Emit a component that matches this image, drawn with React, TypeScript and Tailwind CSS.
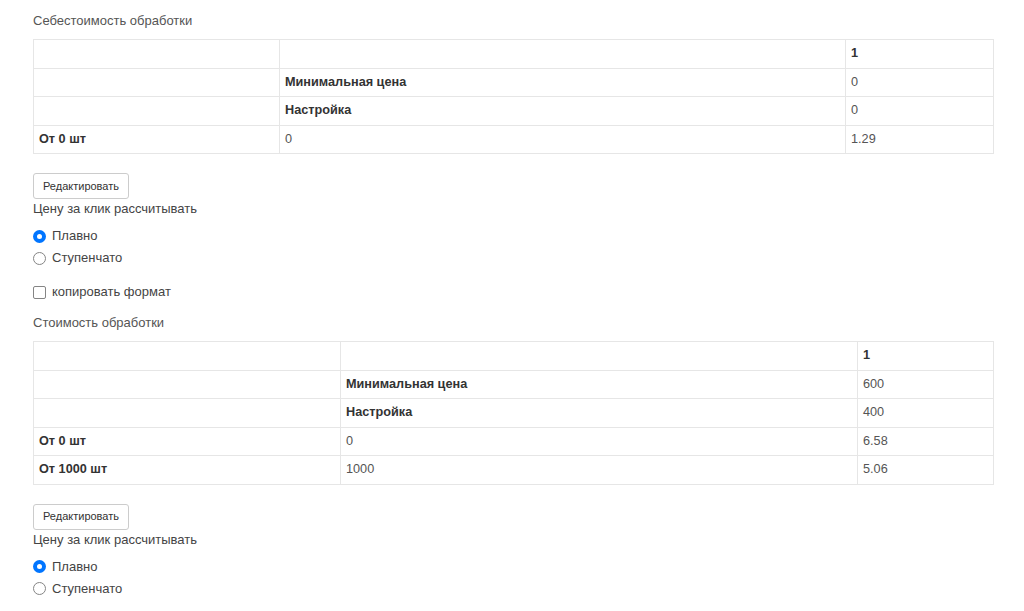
import React from "react";

interface Row {
  label: string;
  mid: string;
  value: string;
  labelBold?: boolean;
  midBold?: boolean;
  valueBold?: boolean;
}

const costRows: Row[] = [
  { label: "", mid: "", value: "1", valueBold: true },
  { label: "", mid: "Минимальная цена", value: "0", midBold: true },
  { label: "", mid: "Настройка", value: "0", midBold: true },
  { label: "От 0 шт", mid: "0", value: "1.29", labelBold: true },
];

const priceRows: Row[] = [
  { label: "", mid: "", value: "1", valueBold: true },
  { label: "", mid: "Минимальная цена", value: "600", midBold: true },
  { label: "", mid: "Настройка", value: "400", midBold: true },
  { label: "От 0 шт", mid: "0", value: "6.58", labelBold: true },
  { label: "От 1000 шт", mid: "1000", value: "5.06", labelBold: true },
];

const cell = (bold?: boolean) =>
  `border border-[#e6e6e6] h-[28.5px] px-[5px] py-0 align-middle text-[12.7px] ${
    bold ? "font-bold text-[#333]" : "text-[#555]"
  }`;

function PriceTable({ rows, widths }: { rows: Row[]; widths: string[] }) {
  return (
    <table className="w-[960px] border-collapse table-fixed">
      <colgroup>
        <col className={widths[0]} />
        <col className={widths[1]} />
        <col className={widths[2]} />
      </colgroup>
      <tbody>
        {rows.map((r, i) => (
          <tr key={i}>
            <td className={cell(r.labelBold)}>{r.label}</td>
            <td className={cell(r.midBold)}>{r.mid}</td>
            <td className={cell(r.valueBold)}>{r.value}</td>
          </tr>
        ))}
      </tbody>
    </table>
  );
}

function Radio({ checked, label }: { checked?: boolean; label: string }) {
  return (
    <label className="flex items-center gap-[6px] h-[22px] text-[13px] text-[#444]">
      {checked ? (
        <span className="w-[13px] h-[13px] rounded-full bg-[#0075ff] flex items-center justify-center">
          <span className="w-[5px] h-[5px] rounded-full bg-white" />
        </span>
      ) : (
        <span className="w-[13px] h-[13px] rounded-full border border-[#858585] bg-white" />
      )}
      {label}
    </label>
  );
}

function Section({
  title,
  rows,
  widths,
}: {
  title: string;
  rows: Row[];
  widths: string[];
}) {
  return (
    <div>
      <div className="text-[13px] text-[#555] leading-[18px]">{title}</div>
      <div className="mt-[9px]">
        <PriceTable rows={rows} widths={widths} />
      </div>
      <button className="mt-[19px] h-[26px] px-[9px] border border-[#ccc] rounded-[3px] bg-white text-[11px] text-[#333]">
        Редактировать
      </button>
      <div className="text-[13px] text-[#444] leading-[18px] mt-[1px]">
        Цену за клик рассчитывать
      </div>
      <div className="mt-[7px]">
        <Radio checked label="Плавно" />
        <Radio label="Ступенчато" />
      </div>
    </div>
  );
}

export default function App() {
  return (
    <div className="bg-white min-h-[611px] px-[33px] pt-[12px] font-['Liberation_Sans',Arial,sans-serif]">
      <Section
        title="Себестоимость обработки"
        rows={costRows}
        widths={["w-[246px]", "w-[566px]", "w-[148px]"]}
      />
      <label className="flex items-center gap-[6px] h-[22px] mt-[12px] text-[13px] text-[#444]">
        <span className="w-[13px] h-[13px] rounded-[2px] border border-[#858585] bg-white" />
        копировать формат
      </label>
      <div className="mt-[11px]">
        <Section
          title="Стоимость обработки"
          rows={priceRows}
          widths={["w-[307px]", "w-[517px]", "w-[136px]"]}
        />
      </div>
    </div>
  );
}
